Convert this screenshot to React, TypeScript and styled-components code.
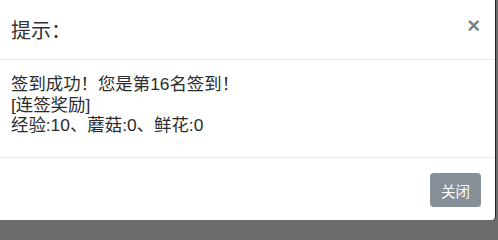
import styled, { createGlobalStyle } from "styled-components";

const GlobalStyle = createGlobalStyle`
  html, body {
    margin: 0;
    padding: 0;
    background: #6b6b6b;
  }
  body {
    font-family: "Liberation Sans", "Noto Sans CJK SC", sans-serif;
    color: #333;
  }
`;

const Modal = styled.div`
  width: 496px;
  height: 220px;
  background: #fff;
  border-right: 1px solid #222;
  border-radius: 0 0 4px 0;
  box-sizing: border-box;
  display: flex;
  flex-direction: column;
`;

const Header = styled.div`
  height: 60px;
  display: flex;
  align-items: center;
  justify-content: space-between;
  padding: 0 15px 0 11px;
  border-bottom: 1px solid #e9ecef;
  box-sizing: border-box;
`;

const Title = styled.h5`
  margin: 0;
  font-size: 20px;
  font-weight: 400;
  color: #333;
  font-family: "Noto Sans CJK SC", sans-serif;
`;

const CloseButton = styled.button`
  border: 0;
  background: transparent;
  padding: 0;
  margin-top: -8px;
  font-family: "Liberation Sans", sans-serif;
  font-size: 22px;
  font-weight: 700;
  line-height: 1;
  color: #000;
  opacity: 0.5;
  cursor: pointer;
`;

const Body = styled.div`
  flex: 1;
  padding: 14px 11px 0;
  font-size: 17.4px;
  line-height: 20.5px;
  color: #2b2b2b;
`;

const Footer = styled.div`
  height: 63px;
  display: flex;
  justify-content: flex-end;
  align-items: flex-start;
  padding: 15px 14px 0;
  border-top: 1px solid #e9ecef;
  box-sizing: border-box;
`;

const Button = styled.button`
  width: 51px;
  height: 34px;
  border: 0;
  border-radius: 4px;
  background: #868e96;
  color: #fff;
  font-family: "Noto Sans CJK SC", sans-serif;
  font-size: 14.5px;
  padding: 0;
  cursor: pointer;
`;

export default function App() {
  return (
    <>
      <GlobalStyle />
      <Modal>
        <Header>
          <Title>提示：</Title>
          <CloseButton>×</CloseButton>
        </Header>
        <Body>
          签到成功！您是第16名签到！
          <br />
          [连签奖励]
          <br />
          经验:10、蘑菇:0、鲜花:0
        </Body>
        <Footer>
          <Button>关闭</Button>
        </Footer>
      </Modal>
    </>
  );
}
